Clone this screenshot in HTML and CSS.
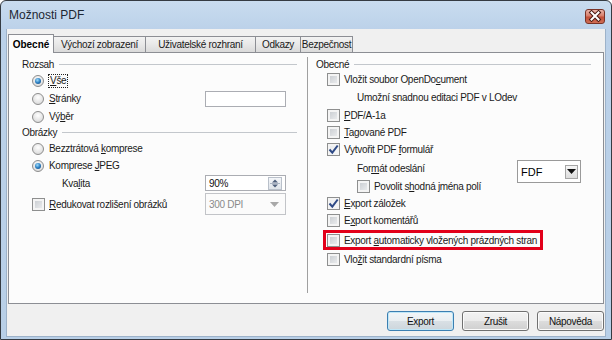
FILE: index.html
```html
<!DOCTYPE html>
<html>

<head>
	<title>Možnosti PDF</title>
	<meta charset=utf-8>
	<link rel="stylesheet" href="styles.css">
</head>

<body>
	<div class="window">
		<div class="titlebar">
			<div class="title">Možnosti PDF</div>
			<div class="close">
				<svg width="20" height="15" viewBox="0 0 20 15">
					<path d="M6.5 3.5l7 7M13.5 3.5l-7 7" stroke="#4a1a12" stroke-width="4" stroke-linecap="square" />
					<path d="M6.5 3.5l7 7M13.5 3.5l-7 7" stroke="#fff" stroke-width="2" stroke-linecap="square" />
				</svg>
			</div>
		</div>
		<div class="client">
			<div class="tabs">
				<div class="tab active" style="width:46px">Obecné</div>
				<div class="tab" style="width:93px">Výchozí zobrazení</div>
				<div class="tab" style="width:111px">Uživatelské rozhraní</div>
				<div class="tab" style="width:46px">Odkazy</div>
				<div class="tab" style="width:53px">Bezpečnost</div>
			</div>
			<div class="panel">
				<div class="col left">
					<div class="group r16">Rozsah</div>
					<div class="row r17"><span class="radio on"></span><span class="focus"><u>V</u>še</span></div>
					<div class="row r19"><span class="radio"></span><span class="label"><u>S</u>tránky</span><span class="field"></span></div>
					<div class="row r17"><span class="radio"></span><span class="label">Vý<u>b</u>ěr</span></div>
					<div class="group r15">Obrázky</div>
					<div class="row r17"><span class="radio"></span><span class="label">Bezztrátová <u>k</u>omprese</span></div>
					<div class="row r17"><span class="radio on"></span><span class="label">Komprese <u>J</u>PEG</span></div>
					<div class="row r18 indent"><span class="label">Kva<u>l</u>ita</span>
						<span class="field spin">90%
							<span class="spinbtn">
								<svg width="12" height="11" viewBox="0 0 12 11">
									<path d="M3 4.5h6L6 1.5z" fill="#4e5f7c" />
									<path d="M1 5.5h10" stroke="#aab4c3" />
									<path d="M3 6.5h6L6 9.5z" fill="#4e5f7c" />
								</svg>
							</span>
						</span>
					</div>
					<div class="row r24"><span class="check"></span><span class="label"><u>R</u>edukovat rozlišení obrázků</span>
						<span class="field combo disabled">300 DPI
							<svg width="9" height="5" viewBox="0 0 9 5"><path d="M0 0h9L4.5 5z" fill="#a8a8a8" /></svg>
						</span>
					</div>
				</div>
				<div class="sep"></div>
				<div class="col right">
					<div class="group r16">Obecné</div>
					<div class="row r15"><span class="check"></span><span class="label">Vložit soubor OpenDo<u>c</u>ument</span></div>
					<div class="row r20 sub"><span class="label">Umožní snadnou editaci PDF v LOdev</span></div>
					<div class="row r17"><span class="check"></span><span class="label"><u>P</u>DF/A-1a</span></div>
					<div class="row r17"><span class="check"></span><span class="label"><u>T</u>agované PDF</span></div>
					<div class="row r17"><span class="check on"><svg width="11" height="11" viewBox="0 0 11 11"><path d="M1.5 5.5l2.8 3.2 5.4-7.2" fill="none" stroke="#2f4a86" stroke-width="2" /></svg></span><span class="label">Vytvořit PDF <u>f</u>ormulář</span></div>
					<div class="row r20 sub"><span class="label">For<u>m</u>át odeslání</span>
						<span class="fdf">FDF
							<span class="dropbtn"><svg width="9" height="5" viewBox="0 0 9 5"><path d="M0 0h9L4.5 5z" fill="#111" /></svg></span>
						</span>
					</div>
					<div class="row r17 sub"><span class="check"></span><span class="label">Povolit s<u>h</u>odná jména polí</span></div>
					<div class="row r17"><span class="check on"><svg width="11" height="11" viewBox="0 0 11 11"><path d="M1.5 5.5l2.8 3.2 5.4-7.2" fill="none" stroke="#2f4a86" stroke-width="2" /></svg></span><span class="label"><u>E</u>xport záložek</span></div>
					<div class="row r17"><span class="check"></span><span class="label">E<u>x</u>port komentářů</span></div>
					<div class="row r22"><div class="marked"><span class="check"></span><span class="label">Export <u>a</u>utomaticky vložených prázdných stran</span></div></div>
					<div class="row r16"><span class="check"></span><span class="label">Vlo<u>ž</u>it standardní písma</span></div>
				</div>
			</div>
			<div class="buttons">
				<div class="button default">Export</div>
				<div class="button">Zrušit</div>
				<div class="button">Nápověda</div>
			</div>
		</div>
	</div>
</body>

</html>
```

FILE: styles.css
```css
body {
	margin: 0;
	font-family: "Liberation Sans", Arial, sans-serif;
	font-size: 10px;
	letter-spacing: -0.3px;
	color: #1a1a1a;
	background: #fff;
}

.window {
	width: 612px;
	height: 340px;
	box-sizing: border-box;
	border: 1px solid #353b42;
	border-radius: 6px 6px 0 0;
	background: linear-gradient(#c9dcef, #bbd1e9 30px, #b8cfe7);
	display: flex;
	flex-direction: column;
}

.titlebar {
	height: 28px;
	flex-shrink: 0;
	display: flex;
	align-items: flex-start;
	padding: 0 6px 0 8px;
}

.title {
	flex: 1;
	font-size: 12px;
	letter-spacing: 0;
	color: #1d2733;
	margin-top: 7px;
}

.close {
	width: 20px;
	height: 15px;
	margin-top: 8px;
	box-sizing: border-box;
	border: 1px solid #7a3327;
	border-radius: 3px;
	background: linear-gradient(#e9b3a8, #d77f6c 45%, #c3503a 55%, #cf6e55);
	display: flex;
	align-items: center;
	justify-content: center;
	overflow: hidden;
}

.close svg {
	flex-shrink: 0;
}

.client {
	height: 308px;
	margin: 0 5px;
	box-sizing: border-box;
	background: #f0f0f0;
	border: 1px solid #9db2c9;
	border-top: 0;
	padding: 5px 1px 0 1px;
}

.tabs {
	height: 18px;
	display: flex;
	align-items: flex-end;
}

.tab {
	height: 16px;
	box-sizing: border-box;
	margin-right: -1px;
	border: 1px solid #8c8e94;
	border-bottom: 0;
	background: linear-gradient(#f3f3f3, #e8e8e8 50%, #dadada);
	display: flex;
	align-items: center;
	justify-content: center;
	white-space: nowrap;
}

.tab.active {
	height: 19px;
	margin-bottom: -1px;
	position: relative;
	z-index: 1;
	background: #fcfcfc;
	font-weight: bold;
	letter-spacing: 0;
	color: #000;
}

.panel {
	height: 252px;
	box-sizing: border-box;
	border: 1px solid #8c8e94;
	background: #fcfcfc;
	display: grid;
	grid-template-columns: 298px 1px 1fr;
}

.col {
	padding-top: 3px;
}

.col.left {
	padding: 3px 10px 0 13px;
}

.col.right {
	padding: 3px 12px 0 8px;
}

.sep {
	background: #a0a0a0;
	margin: 4px 0 10px;
}

.group {
	display: flex;
	align-items: center;
	gap: 5px;
}

.group::after {
	content: "";
	flex: 1;
	height: 1px;
	background: #c3c7cc;
}

.row {
	display: flex;
	align-items: center;
	white-space: nowrap;
}

.col.right .row {
	padding-left: 11px;
}

.col.right .row.sub {
	padding-left: 41px;
}

.col.left .row.indent {
	padding-left: 40px;
}

.r15 { height: 15px; }
.r16 { height: 16px; }
.r17 { height: 17px; }
.r18 { height: 18px; }
.r19 { height: 19px; }
.r20 { height: 20px; }
.r22 { height: 22px; }
.r24 { height: 24px; }

.label {
	flex: 1;
}

u {
	text-underline-offset: 1px;
}

.focus {
	outline: 1px dotted #222;
	outline-offset: 0;
	padding: 0 1px;
	line-height: 12px;
}

.radio {
	width: 12px;
	height: 12px;
	box-sizing: border-box;
	flex-shrink: 0;
	margin: 0 5px 0 10px;
	border: 1px solid #8d8d8d;
	border-radius: 50%;
	background: radial-gradient(circle at 50% 35%, #ffffff, #e4e4e4 60%, #cfcfcf);
	display: flex;
	align-items: center;
	justify-content: center;
}

.radio.on::after {
	content: "";
	width: 6px;
	height: 6px;
	border-radius: 50%;
	background: radial-gradient(circle at 40% 35%, #9fdcfb, #2c7fc2 50%, #0f3f72);
}

.check {
	width: 13px;
	height: 13px;
	box-sizing: border-box;
	flex-shrink: 0;
	margin-right: 4px;
	border: 1px solid #8e8f8f;
	background: linear-gradient(135deg, #c4c8cd, #f1f2f3);
	box-shadow: inset 0 0 0 2px #f4f4f4;
	display: flex;
	align-items: center;
	justify-content: center;
}

.col.left .check {
	margin-left: 10px;
	margin-right: 4px;
}

.check.on {
	background: linear-gradient(135deg, #e6e8ea, #fbfbfb);
}

.field {
	width: 81px;
	height: 16px;
	box-sizing: border-box;
	margin-right: 11px;
	border: 1px solid #abadb3;
	background: #fff;
	display: flex;
	align-items: center;
	padding-left: 3px;
	flex-shrink: 0;
}

.spin {
	justify-content: space-between;
	padding-right: 3px;
	color: #111;
}

.spinbtn {
	width: 12px;
	height: 11px;
	border: 1px solid #b9c0ca;
	background: linear-gradient(#f4f6f9, #dfe4ea);
	display: flex;
}

.combo {
	height: 22px;
	justify-content: space-between;
	padding-right: 6px;
}

.combo.disabled {
	color: #8a8a8a;
	border-color: #c2c4c8;
	background: #fbfbfb;
}

.fdf {
	width: 64px;
	height: 23px;
	box-sizing: border-box;
	align-self: flex-start;
	margin: 2px 10px 0 0;
	border: 1px solid #9a9a9a;
	background: #fff;
	display: flex;
	align-items: center;
	justify-content: space-between;
	padding: 0 2px 0 3px;
	font-size: 11px;
	letter-spacing: 0;
	color: #000;
}

.dropbtn {
	width: 13px;
	height: 14px;
	box-sizing: border-box;
	border: 1px solid #a5a5a5;
	background: linear-gradient(#f6f6f6, #dcdcdc);
	display: flex;
	align-items: center;
	justify-content: center;
}

.marked {
	width: 220px;
	height: 20px;
	box-sizing: border-box;
	margin-left: -4px;
	border: 3px solid #e2001a;
	display: flex;
	align-items: center;
	padding-left: 1px;
}

.buttons {
	display: flex;
	justify-content: flex-end;
	gap: 8px;
	margin-top: 7px;
}

.button {
	width: 67px;
	height: 20px;
	box-sizing: border-box;
	border: 1px solid #707070;
	border-radius: 3px;
	background: linear-gradient(#f2f2f2, #ebebeb 50%, #dddddd 50%, #cfcfcf);
	box-shadow: inset 0 0 0 1px #fbfbfb;
	display: flex;
	align-items: center;
	justify-content: center;
	color: #111;
}

.button.default {
	border-color: #3c7fb1;
	box-shadow: inset 0 0 0 1px #bfe7f8;
	background: linear-gradient(#f2f6f8, #e9eef1 50%, #d9e0e5 50%, #cdd6dc);
}
```
